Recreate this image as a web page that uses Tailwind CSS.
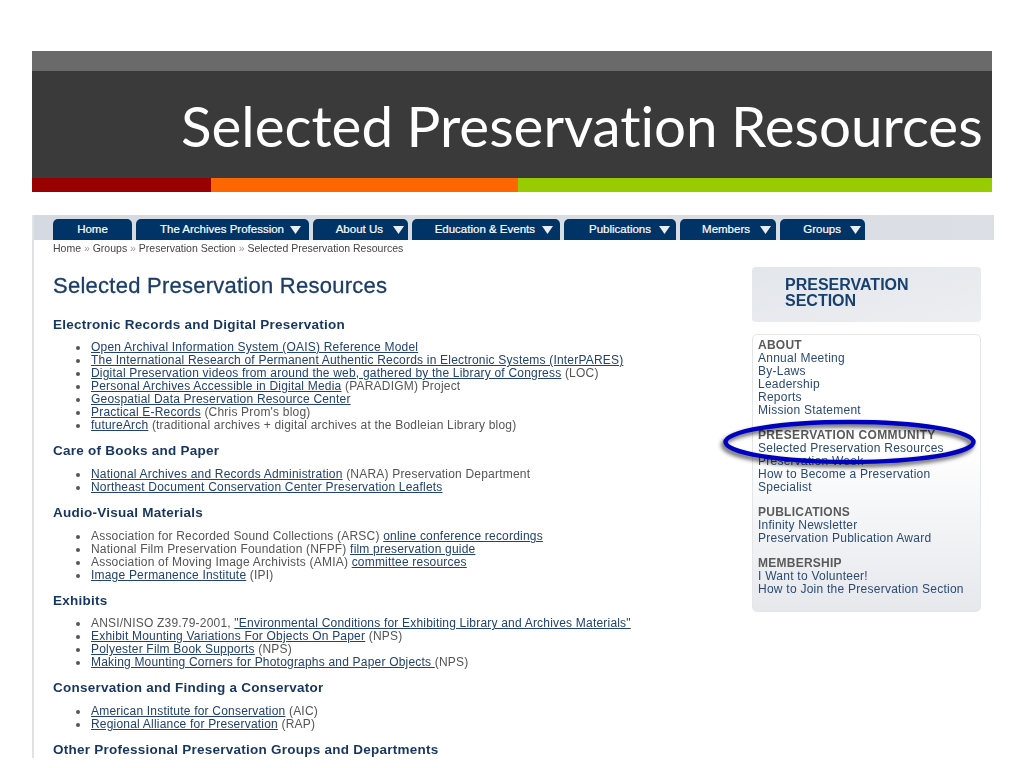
<!DOCTYPE html>
<html lang="en">
<head>
  <meta charset="UTF-8" />
  <title>Selected Preservation Resources</title>
  <script src="https://cdn.jsdelivr.net/npm/@tailwindcss/browser@4"></script>
</head>
<body class="bg-white w-[1024px] h-[768px] overflow-hidden font-['Liberation_Sans',sans-serif]">
  <div class="pt-[51px] pl-[32px]">
    <!-- Slide header -->
    <div class="w-[960px]">
      <div class="h-[20px] bg-[#6a6a6a]"></div>
      <div class="h-[107px] bg-[#3a3a3a] pl-[149px] pt-[22px]">
        <h1 class="font-['Lato',sans-serif] text-[56.5px] leading-[64px] text-white whitespace-nowrap [font-variant-ligatures:none] [word-spacing:-1px]">Selected Preservation Resources</h1>
      </div>
      <div class="flex h-[14px]">
        <div class="w-[179px] bg-[#990000]"></div>
        <div class="w-[307px] bg-[#ff6600]"></div>
        <div class="flex-1 bg-[#99cc00]"></div>
      </div>
    </div>

    <!-- Website screenshot -->
    <div class="relative mt-[23px] w-[962px] h-[543px] overflow-hidden border-l-2 border-[#dfe2e6]">
      <div class="blur-[0.4px]">
      <div class="flex gap-[4px] h-[25px] pt-[4px] pl-[19px] bg-gradient-to-r from-[#d5dae2] to-[#dcdfe5] text-[11.5px] text-white [-webkit-text-stroke:0.2px_white]">
        <div class="w-[79px] rounded-t-[5px] bg-[#003366] flex items-center justify-center">Home</div>
        <div class="w-[173px] rounded-t-[5px] bg-[#003366] flex items-center justify-end pr-[8px] gap-[6px]">The Archives Profession
          <svg width="11" height="8" viewBox="0 0 11 8"><path d="M0 0h11L5.500 8z" fill="#e8edf3"/></svg></div>
        <div class="w-[95px] rounded-t-[5px] bg-[#003366] flex items-center justify-end pr-[4px] gap-[10px]">About Us
          <svg width="11" height="8" viewBox="0 0 11 8"><path d="M0 0h11L5.500 8z" fill="#e8edf3"/></svg></div>
        <div class="w-[148px] rounded-t-[5px] bg-[#003366] flex items-center justify-end pr-[7px] gap-[7px]">Education &amp; Events
          <svg width="11" height="8" viewBox="0 0 11 8"><path d="M0 0h11L5.500 8z" fill="#e8edf3"/></svg></div>
        <div class="w-[112px] rounded-t-[5px] bg-[#003366] flex items-center justify-end pr-[6px] gap-[8px]">Publications
          <svg width="11" height="8" viewBox="0 0 11 8"><path d="M0 0h11L5.500 8z" fill="#e8edf3"/></svg></div>
        <div class="w-[96px] rounded-t-[5px] bg-[#003366] flex items-center justify-end pr-[5px] gap-[10px]">Members
          <svg width="11" height="8" viewBox="0 0 11 8"><path d="M0 0h11L5.500 8z" fill="#e8edf3"/></svg></div>
        <div class="w-[85px] rounded-t-[5px] bg-[#003366] flex items-center justify-end pr-[4px] gap-[9px]">Groups
          <svg width="11" height="8" viewBox="0 0 11 8"><path d="M0 0h11L5.500 8z" fill="#e8edf3"/></svg></div>
      </div>

      <div class="flex">
        <!-- Main column -->
        <div class="w-[718px] pl-[19px] text-[12px] leading-[13px] tracking-[0.2px] text-[#555555]">
          <div class="mt-[2px] text-[10.5px] leading-[13px] tracking-normal text-[#444444]">Home <span class="text-[#999999]">»</span> Groups <span class="text-[#999999]">»</span> Preservation Section <span class="text-[#999999]">»</span> Selected Preservation Resources</div>
          <h2 class="mt-[19px] text-[22px] leading-[24px] tracking-[0.25px] text-[#1b3d68] [-webkit-text-stroke:0.3px_#1b3d68]">Selected Preservation Resources</h2>

          <h3 class="mt-[20px] text-[13.5px] leading-[13px] tracking-[0.25px] font-bold text-[#17365f]">Electronic Records and Digital Preservation</h3>
          <ul class="mt-[10px] pl-[38px] *:relative *:before:absolute *:before:left-[-15px] *:before:top-[5px] *:before:size-[4px] *:before:rounded-full *:before:bg-[#555555]">
            <li><a class="underline text-[#22426f]">Open Archival Information System (OAIS) Reference Model</a></li>
            <li><a class="underline text-[#22426f]">The International Research of Permanent Authentic Records in Electronic Systems (InterPARES)</a></li>
            <li><a class="underline text-[#22426f]">Digital Preservation videos from around the web, gathered by the Library of Congress</a> (LOC)</li>
            <li><a class="underline text-[#22426f]">Personal Archives Accessible in Digital Media</a> (PARADIGM) Project</li>
            <li><a class="underline text-[#22426f]">Geospatial Data Preservation Resource Center</a></li>
            <li><a class="underline text-[#22426f]">Practical E-Records</a> (Chris Prom's blog)</li>
            <li><a class="underline text-[#22426f]">futureArch</a> (traditional archives + digital archives at the Bodleian Library blog)</li>
          </ul>

          <h3 class="mt-[12px] text-[13.5px] leading-[13px] tracking-[0.25px] font-bold text-[#17365f]">Care of Books and Paper</h3>
          <ul class="mt-[11px] pl-[38px] *:relative *:before:absolute *:before:left-[-15px] *:before:top-[5px] *:before:size-[4px] *:before:rounded-full *:before:bg-[#555555]">
            <li><a class="underline text-[#22426f]">National Archives and Records Administration</a> (NARA) Preservation Department</li>
            <li><a class="underline text-[#22426f]">Northeast Document Conservation Center Preservation Leaflets</a></li>
          </ul>

          <h3 class="mt-[12px] text-[13.5px] leading-[13px] tracking-[0.25px] font-bold text-[#17365f]">Audio-Visual Materials</h3>
          <ul class="mt-[11px] pl-[38px] *:relative *:before:absolute *:before:left-[-15px] *:before:top-[5px] *:before:size-[4px] *:before:rounded-full *:before:bg-[#555555]">
            <li>Association for Recorded Sound Collections (ARSC) <a class="underline text-[#22426f]">online conference recordings</a></li>
            <li>National Film Preservation Foundation (NFPF) <a class="underline text-[#22426f]">film preservation guide</a></li>
            <li>Association of Moving Image Archivists (AMIA) <a class="underline text-[#22426f]">committee resources</a></li>
            <li><a class="underline text-[#22426f]">Image Permanence Institute</a> (IPI)</li>
          </ul>

          <h3 class="mt-[12px] text-[13.5px] leading-[13px] tracking-[0.25px] font-bold text-[#17365f]">Exhibits</h3>
          <ul class="mt-[10px] pl-[38px] *:relative *:before:absolute *:before:left-[-15px] *:before:top-[5px] *:before:size-[4px] *:before:rounded-full *:before:bg-[#555555]">
            <li>ANSI/NISO Z39.79-2001, <a class="underline text-[#22426f]">"Environmental Conditions for Exhibiting Library and Archives Materials"</a></li>
            <li><a class="underline text-[#22426f]">Exhibit Mounting Variations For Objects On Paper</a> (NPS)</li>
            <li><a class="underline text-[#22426f]">Polyester Film Book Supports</a> (NPS)</li>
            <li><a class="underline text-[#22426f]">Making Mounting Corners for Photographs and Paper Objects </a> (NPS)</li>
          </ul>

          <h3 class="mt-[12px] text-[13.5px] leading-[13px] tracking-[0.25px] font-bold text-[#17365f]">Conservation and Finding a Conservator</h3>
          <ul class="mt-[11px] pl-[38px] *:relative *:before:absolute *:before:left-[-15px] *:before:top-[5px] *:before:size-[4px] *:before:rounded-full *:before:bg-[#555555]">
            <li><a class="underline text-[#22426f]">American Institute for Conservation</a> (AIC)</li>
            <li><a class="underline text-[#22426f]">Regional Alliance for Preservation</a> (RAP)</li>
          </ul>

          <h3 class="mt-[12px] text-[13.5px] leading-[13px] tracking-[0.25px] font-bold text-[#17365f]">Other Professional Preservation Groups and Departments</h3>
        </div>

        <!-- Sidebar -->
        <div class="w-[229px] pt-[27px]">
          <div class="h-[55px] rounded-[4px] bg-gradient-to-br from-[#e3e6eb] to-[#eceef1] pl-[33px] pt-[10px] text-[16px] leading-[16px] font-bold text-[#17406f]">PRESERVATION<br />SECTION</div>
          <div class="mt-[12px] h-[278px] rounded-[5px] border border-[#e4e6ea] bg-gradient-to-b from-white from-40% to-[#e6e8ec] pl-[5px] pt-[4px] text-[12px] leading-[13px] tracking-[0.25px] text-[#2a4a75]">
            <div class="font-bold text-[#5a5a5a]">ABOUT</div>
            <div>Annual Meeting</div>
            <div>By-Laws</div>
            <div>Leadership</div>
            <div>Reports</div>
            <div>Mission Statement</div>
            <div class="mt-[12px] font-bold text-[#5a5a5a] tracking-[0.35px]">PRESERVATION COMMUNITY</div>
            <div>Selected Preservation Resources</div>
            <div>Preservation Week</div>
            <div>How to Become a Preservation</div>
            <div>Specialist</div>
            <div class="mt-[12px] font-bold text-[#5a5a5a]">PUBLICATIONS</div>
            <div>Infinity Newsletter</div>
            <div>Preservation Publication Award</div>
            <div class="mt-[12px] font-bold text-[#5a5a5a]">MEMBERSHIP</div>
            <div>I Want to Volunteer!</div>
            <div>How to Join the Preservation Section</div>
          </div>
        </div>
      </div>
      </div>

      <!-- Blue circle drawn over the sidebar -->
      <svg class="absolute left-[685px] top-[200px] overflow-visible [filter:drop-shadow(-2px_3px_2px_rgba(0,0,0,0.65))]" width="265" height="60" viewBox="0 0 265 60">
        <ellipse cx="130.500" cy="27" rx="124" ry="20" fill="none" stroke="#0000c0" stroke-width="4.500"/>
      </svg>
    </div>
  </div>
</body>
</html>
